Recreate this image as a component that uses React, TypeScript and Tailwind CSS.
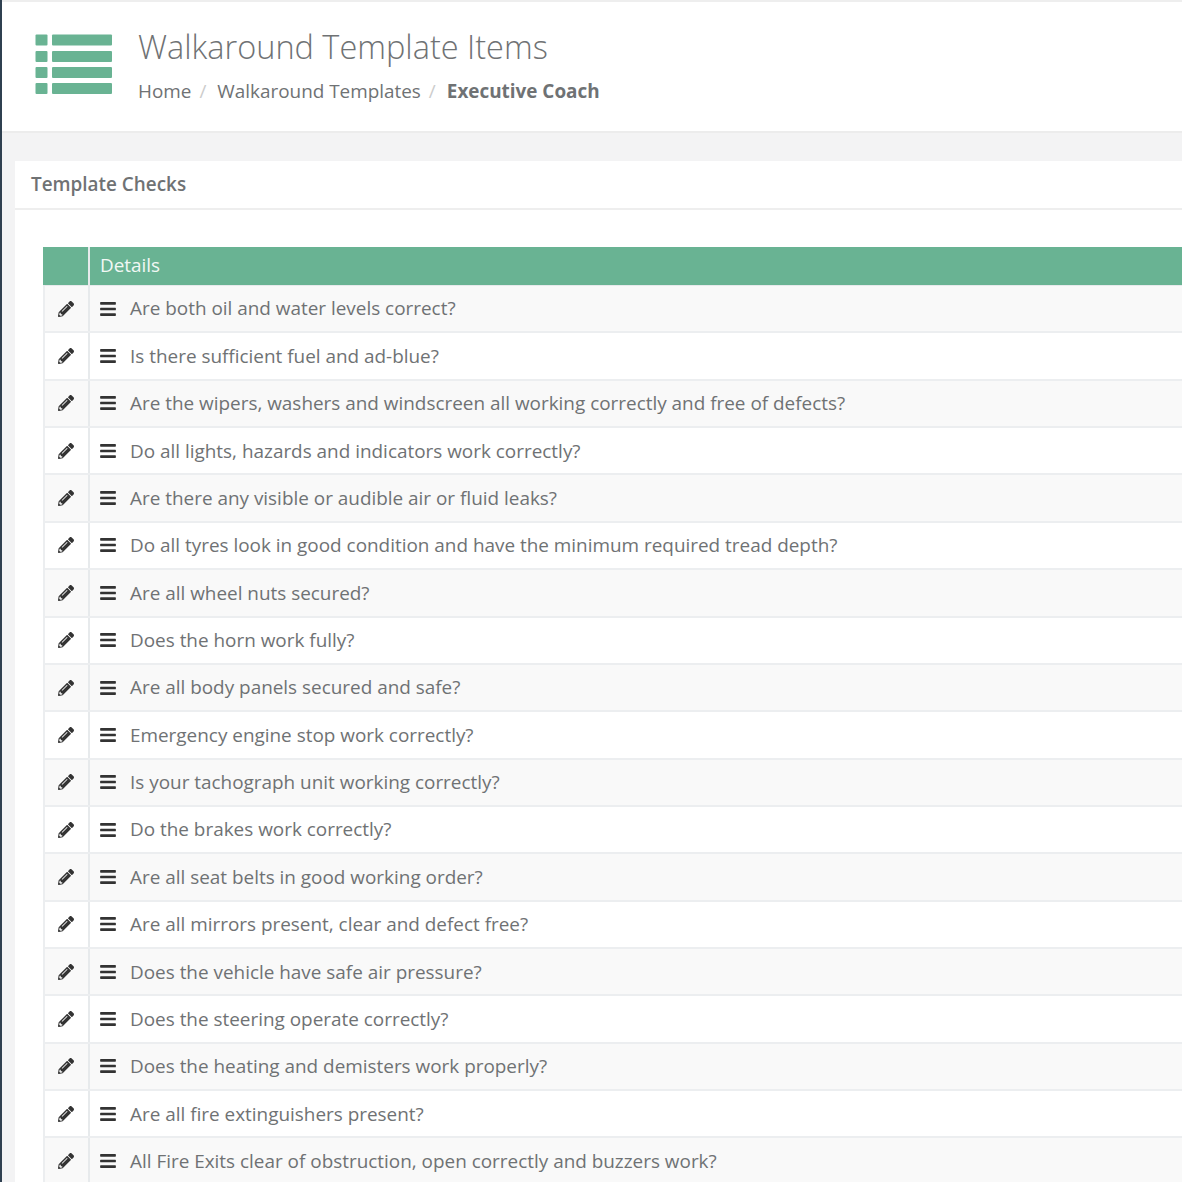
import React from "react";
import { FaBars, FaPencilAlt } from "react-icons/fa";

const checks = [
  "Are both oil and water levels correct?",
  "Is there sufficient fuel and ad-blue?",
  "Are the wipers, washers and windscreen all working correctly and free of defects?",
  "Do all lights, hazards and indicators work correctly?",
  "Are there any visible or audible air or fluid leaks?",
  "Do all tyres look in good condition and have the minimum required tread depth?",
  "Are all wheel nuts secured?",
  "Does the horn work fully?",
  "Are all body panels secured and safe?",
  "Emergency engine stop work correctly?",
  "Is your tachograph unit working correctly?",
  "Do the brakes work correctly?",
  "Are all seat belts in good working order?",
  "Are all mirrors present, clear and defect free?",
  "Does the vehicle have safe air pressure?",
  "Does the steering operate correctly?",
  "Does the heating and demisters work properly?",
  "Are all fire extinguishers present?",
  "All Fire Exits clear of obstruction, open correctly and buzzers work?",
];

function ListIcon() {
  return (
    <svg width="78" height="62" viewBox="0 0 78 62" className="shrink-0" fill="#69b393">
      <rect x="0.5" y="0.5" width="12" height="11" rx="1" />
      <rect x="17" y="0.5" width="60" height="11" rx="1" />
      <rect x="0.5" y="17" width="12" height="11" rx="1" />
      <rect x="17" y="17" width="60" height="11" rx="1" />
      <rect x="0.5" y="33" width="12" height="11" rx="1" />
      <rect x="17" y="33" width="60" height="11" rx="1" />
      <rect x="0.5" y="49" width="12" height="11" rx="1" />
      <rect x="17" y="49" width="60" height="11" rx="1" />
    </svg>
  );
}

export default function App() {
  return (
    <div className="h-[1182px] overflow-hidden flex bg-[#f3f3f4] font-['Open_Sans',sans-serif] text-[#6f7274]">
      <div className="w-0.5 shrink-0 bg-[#2f4050]" />
      <div className="flex-1 min-w-0">
        <header className="h-[133px] bg-white border-t-2 border-b-2 border-t-[#eeeeee] border-b-[#ececec] flex pl-[33px] pt-[32px]">
          <ListIcon />
          <div className="ml-[25px] -mt-[9px]">
            <h1 className="text-[32.5px] leading-[44px] font-light">Walkaround Template Items</h1>
            <div className="mt-[9px] flex items-center text-[18.9px] leading-[26px]">
              <span>Home</span>
              <span className="ml-[8px] text-[#cccccc]">/</span>
              <span className="ml-[11px]">Walkaround Templates</span>
              <span className="ml-[8px] text-[#cccccc]">/</span>
              <span className="ml-[11px] font-bold">Executive Coach</span>
            </div>
          </div>
        </header>
        <section className="ml-[13px] mt-[28px] bg-white">
          <div className="h-[49px] border-b-2 border-[#eeeeee] pl-[16px] flex items-center text-[18.9px] font-semibold">
            Template Checks
          </div>
          <div className="pl-[28px] pt-[37px]">
            <div className="h-[39px] flex bg-[#69b393] text-[#f2f8f5] text-[18.9px] border-b border-[#e7eaec]">
              <div className="w-[47px] shrink-0 border-r-2 border-[#e7eaec]" />
              <div className="flex-1 pl-[10px] pb-[2px] flex items-center">Details</div>
            </div>
            {checks.map((check, i) => (
              <div
                key={check}
                className={`h-[47.36px] flex border-b-2 border-l-2 border-[#eceef0] text-[18.92px] ${i % 2 === 0 ? "bg-[#f9f9f9]" : "bg-white"}`}
              >
                <div className="w-[45px] shrink-0 border-r-2 border-[#e7eaec] pr-[2px] flex items-center justify-center text-[#333333]">
                  <FaPencilAlt className="w-4 h-4" />
                </div>
                <div className="flex-1 pl-[9px] flex items-center">
                  <FaBars className="w-[18px] h-[18px] text-[#333333] shrink-0" />
                  <span className="ml-[13px] whitespace-nowrap">{check}</span>
                </div>
              </div>
            ))}
          </div>
        </section>
      </div>
    </div>
  );
}
